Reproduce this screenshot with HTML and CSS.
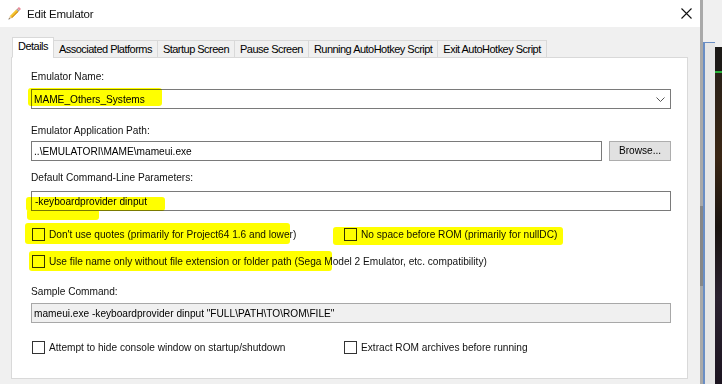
FILE: index.html
```html
<!DOCTYPE html>
<html lang="en">
<head>
    <meta charset="UTF-8">
    <title>Edit Emulator</title>
    <link rel="stylesheet" href="styles.css">
</head>
<body>
<div class="screen">
    <div class="dialog">
        <div class="titlebar">
            <svg class="pencil" width="13" height="13" viewBox="0 0 13 13">
                <g transform="rotate(-45 6.5 6.5)">
                    <polygon points="-2,6.5 1.5,5 1.5,8" fill="#e6c79c"/>
                    <polygon points="-2,6.5 -0.6,5.9 -0.6,7.1" fill="#3a3a3a"/>
                    <rect x="1.5" y="5" width="9" height="3" fill="#f3c530"/>
                    <rect x="1.5" y="7" width="9" height="1" fill="#d48a17"/>
                    <rect x="10.5" y="5" width="1.6" height="3" fill="#a0a0a0"/>
                    <rect x="12.1" y="5" width="2.2" height="3" fill="#e98b98"/>
                </g>
            </svg>
            <span class="title">Edit Emulator</span>
            <svg class="close" width="11" height="11" viewBox="0 0 11 11">
                <path d="M0.5 0.5 L10.5 10.5 M10.5 0.5 L0.5 10.5" stroke="#111" stroke-width="1.1" fill="none"/>
            </svg>
        </div>

        <div class="body">
            <div class="tabs">
                <div class="tab active">Details</div>
                <div class="tab">Associated Platforms</div>
                <div class="tab">Startup Screen</div>
                <div class="tab">Pause Screen</div>
                <div class="tab">Running AutoHotkey Script</div>
                <div class="tab">Exit AutoHotkey Script</div>
            </div>

            <div class="panel">
                <div class="label first">Emulator Name:</div>
                <div class="combo">
                    <span>MAME_Others_Systems</span>
                    <svg width="9" height="5" viewBox="0 0 9 5"><polyline points="0.5,0.5 4.5,4.5 8.5,0.5" stroke="#555" fill="none"/></svg>
                </div>

                <div class="label gap-path">Emulator Application Path:</div>
                <div class="path-row">
                    <div class="textbox grow">..\EMULATORI\MAME\mameui.exe</div>
                    <div class="button">Browse...</div>
                </div>

                <div class="label gap-params">Default Command-Line Parameters:</div>
                <div class="textbox params">-keyboardprovider dinput</div>

                <div class="checks row-a">
                    <div class="check"><span class="box"></span>Don't use quotes (primarily for Project64 1.6 and lower)</div>
                    <div class="check"><span class="box"></span>No space before ROM (primarily for nullDC)</div>
                </div>
                <div class="checks row-b">
                    <div class="check"><span class="box"></span>Use file name only without file extension or folder path (Sega Model 2 Emulator, etc. compatibility)</div>
                </div>

                <div class="label gap-sample">Sample Command:</div>
                <div class="textbox readonly">mameui.exe -keyboardprovider dinput "FULL\PATH\TO\ROM\FILE"</div>

                <div class="checks row-c">
                    <div class="check"><span class="box"></span>Attempt to hide console window on startup/shutdown</div>
                    <div class="check"><span class="box"></span>Extract ROM archives before running</div>
                </div>
            </div>
        </div>
    </div>

    <div class="side">
        <div class="side-edge"><div class="thumb"></div></div>
        <div class="side-pane"></div>
        <div class="side-photo"></div>
    </div>

    <!-- highlighter strokes drawn over the screenshot -->
    <div class="mark" style="left:28px; top:88px; width:134px; height:18px;"></div>
    <div class="mark" style="left:26px; top:197px; width:139px; height:14px;"></div>
    <div class="mark" style="left:27px; top:209px; width:72px; height:11px;"></div>
    <div class="mark" style="left:25px; top:223px; width:265px; height:21px;"></div>
    <div class="mark" style="left:333px; top:227px; width:230px; height:18px;"></div>
    <div class="mark" style="left:29px; top:251px; width:303px; height:20px;"></div>
</div>
</body>
</html>
```

FILE: styles.css
```css
* {
    box-sizing: border-box;
}
body {
    margin: 0;
    font-family: "Liberation Sans", Arial, sans-serif;
    font-size: 10.15px;
    color: #000;
    background: #fff;
}
.screen {
    position: relative;
    display: flex;
    width: 722px;
    height: 384px;
    overflow: hidden;
}
.dialog {
    width: 700px;
    display: flex;
    flex-direction: column;
    background: #f0f0f0;
}
.titlebar {
    height: 27px;
    background: #fff;
    display: flex;
    align-items: center;
    padding-left: 8px;
}
.title {
    font-size: 11.5px;
    letter-spacing: -0.2px;
    margin-left: 6px;
    color: #111;
}
.close {
    margin-left: auto;
    margin-right: 8px;
}
.body {
    flex: 1;
    padding: 10px 12px 0 11px;
}
.tabs {
    position: relative;
    z-index: 1;
    display: flex;
    align-items: flex-end;
    height: 21px;
    margin-bottom: -1px;
    padding-left: 1px;
}
.tab {
    height: 18px;
    padding: 0 5px;
    margin-left: -1px;
    border: 1px solid #d9d9d9;
    background: #f0f0f0;
    font-size: 11px;
    letter-spacing: -0.52px;
    line-height: 16px;
    white-space: nowrap;
}
.tab.active {
    height: 21px;
    margin-left: 0;
    background: #fff;
    border-bottom-color: #fff;
    line-height: 17px;
}
.panel {
    height: 322px;
    display: flex;
    flex-direction: column;
    padding: 12px 16px 0 19px;
    background: #fff;
    border: 1px solid #d9d9d9;
}
.label {
    height: 13px;
    line-height: 13px;
    color: #111;
}
.first {
    margin-bottom: 6px;
}
.gap-path {
    margin-top: 15px;
    margin-bottom: 4px;
}
.gap-params {
    margin-top: 10px;
    margin-bottom: 7px;
}
.gap-sample {
    margin-top: 17px;
    margin-bottom: 5px;
}
.combo, .textbox {
    height: 20px;
    display: flex;
    align-items: center;
    padding-left: 2px;
    border: 1px solid #7a7a7a;
    background: #fff;
    white-space: nowrap;
}
.combo {
    justify-content: space-between;
    padding-right: 5px;
}
.path-row {
    display: flex;
    gap: 7px;
}
.grow {
    flex: 1;
}
.params {
    padding-left: 3px;
}
.readonly {
    background: #f0f0f0;
    border-color: #a8a8a8;
}
.button {
    width: 62px;
    height: 20px;
    line-height: 18px;
    text-align: center;
    background: #e1e1e1;
    border: 1px solid #adadad;
}
.checks {
    display: grid;
    grid-template-columns: 312px 1fr;
    height: 13px;
}
.row-a {
    margin-top: 17px;
}
.row-b {
    margin-top: 14px;
    grid-template-columns: 1fr;
}
.row-c {
    margin-top: 18px;
}
.check {
    display: flex;
    align-items: center;
    gap: 4px;
    white-space: nowrap;
    color: #111;
}
.box {
    width: 13px;
    height: 13px;
    margin-left: 1px;
    border: 1px solid #333;
    background: #fff;
    flex: none;
}
.side {
    width: 22px;
    display: flex;
    background: #f0f0f0;
}
.side-edge {
    width: 3px;
    background: #a9a9a9;
    padding-top: 206px;
}
.thumb {
    height: 80px;
    background: #878787;
}
.side-pane {
    width: 12px;
    margin-top: 42px;
    border-left: 2px solid #6a8ec4;
    border-top: 1px solid #6a8ec4;
    background: #e6e6e6;
}
.side-photo {
    width: 7px;
    margin-top: 47px;
    background: linear-gradient(180deg, #1d1a17 0, #1d1a17 24px, #2bb23a 24px, #2bb23a 26px, #2a2118 26px, #3a2614 110px, #1a1410 180px, #2b2230 250px, #1c1420 337px);
}
.mark {
    position: absolute;
    background: #ffff00;
    mix-blend-mode: multiply;
    border-radius: 3px;
}
```
